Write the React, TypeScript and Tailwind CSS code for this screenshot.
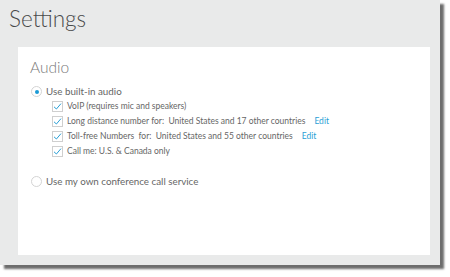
import React from "react";

const font = { fontFamily: "Lato, 'Open Sans', sans-serif" };

function Radio({ checked }: { checked?: boolean }) {
  return (
    <span className="flex items-center justify-center w-[11px] h-[11px] rounded-full border border-[#d4d4d4] bg-white shrink-0">
      {checked && <span className="w-[4px] h-[4px] rounded-full bg-[#1a9ad6]" />}
    </span>
  );
}

function Check() {
  return (
    <span className="flex items-center justify-center w-[11px] h-[11px] border border-[#cfcfcf] bg-white shrink-0">
      <svg width="9" height="9" viewBox="0 0 9 9" fill="none">
        <path d="M1 4.8 L3.4 7 L8 1.6" stroke="#2a9fd6" strokeWidth="1" />
      </svg>
    </span>
  );
}

const options = [
  { text: "VoIP (requires mic and speakers)" },
  { text: "Long distance number for:  United States and 17 other countries", edit: true },
  { text: "Toll-free Numbers  for:  United States and 55 other countries", edit: true },
  { text: "Call me: U.S. & Canada only" },
];

export default function App() {
  return (
    <div className="w-[450px] h-[277px] bg-white" style={font}>
      <div className="w-[440px] h-[265px] bg-[#e9eaea] shadow-[4px_4px_2px_rgba(60,60,60,0.75)] flex flex-col">
        <h1 className="h-[47px] pl-[9px] pt-[5px] text-[22.5px] leading-[28px] text-[#4a4a4a] font-light">
          Settings
        </h1>
        <div className="ml-[18px] w-[412px] h-[208px] bg-white pl-[12px] pt-[10px]">
          <div className="text-[15.5px] leading-[20px] text-[#7a7a7a] font-light">Audio</div>
          <div className="mt-[7px] flex items-center gap-[4px] h-[15px] pl-[1px] text-[9.8px] text-[#666]">
            <Radio checked />
            <span>Use built-in audio</span>
          </div>
          <div className="pl-[22px] flex flex-col">
            {options.map((o) => (
              <div key={o.text} className="flex items-center gap-[4px] h-[15px] text-[8.5px] text-[#666] whitespace-pre">
                <Check />
                <span>{o.text}</span>
                {o.edit && <span className="ml-[5px] text-[#2a9fd6]">Edit</span>}
              </div>
            ))}
          </div>
          <div className="mt-[15px] flex items-center gap-[4px] h-[15px] pl-[1px] text-[9.8px] text-[#666]">
            <Radio />
            <span>Use my own conference call service</span>
          </div>
        </div>
      </div>
    </div>
  );
}
